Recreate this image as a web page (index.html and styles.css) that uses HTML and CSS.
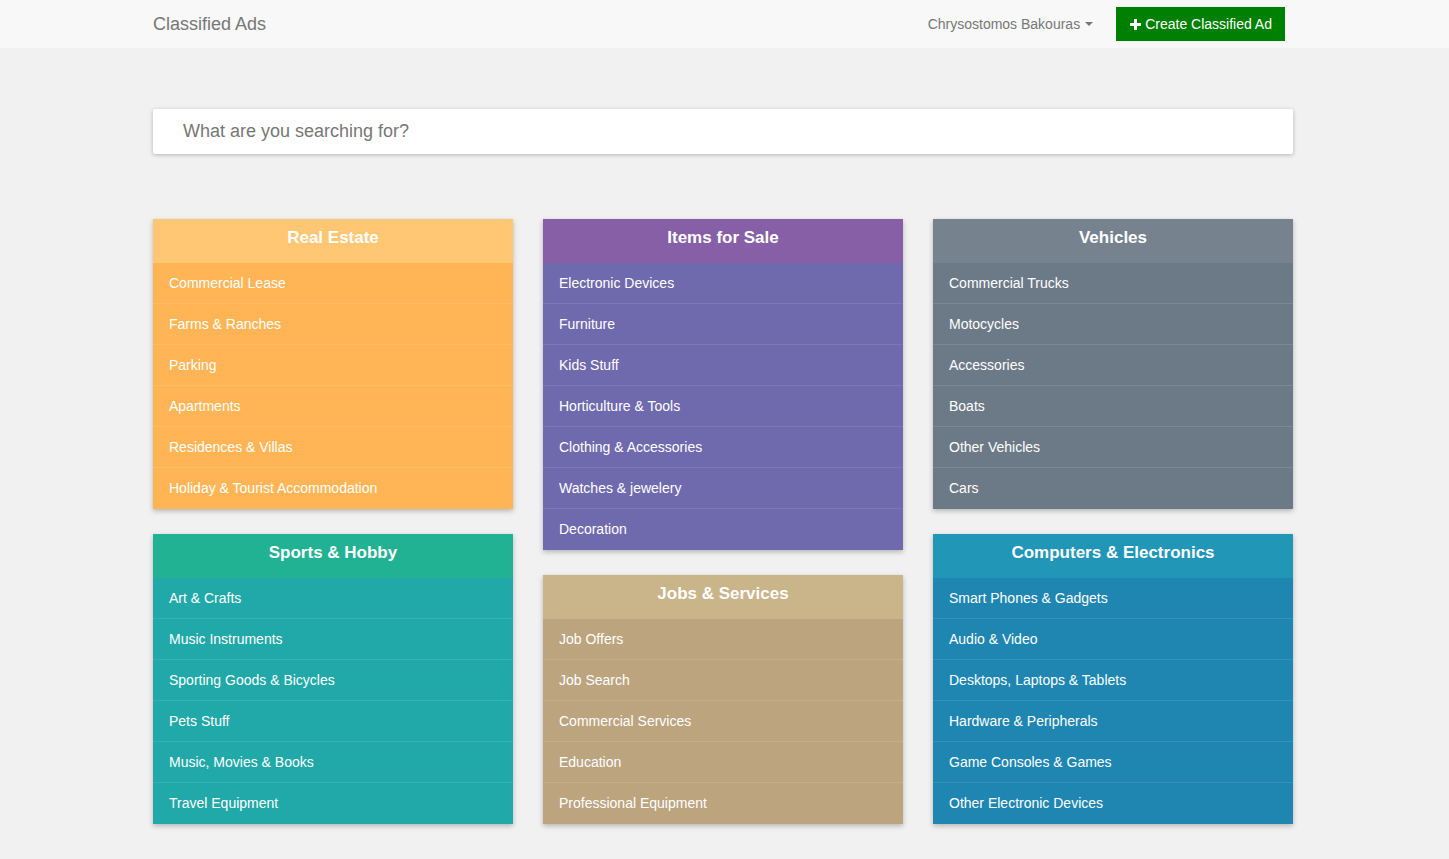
FILE: index.html
```html
<!DOCTYPE html>
<html>
<head>
<meta charset="utf-8">
<title>Classified Ads</title>
<link rel="stylesheet" href="styles.css">
</head>
<body>
<nav class="navbar">
  <div class="container nav-inner">
    <a class="brand" href="#">Classified Ads</a>
    <div class="nav-right">
      <span class="user">Chrysostomos Bakouras <span class="caret"></span></span>
      <a class="btn-create" href="#"><svg class="plus" width="11" height="11" viewBox="0 0 11 11"><rect x="4" y="0" width="3" height="11" fill="#fff"/><rect x="0" y="4" width="11" height="3" fill="#fff"/></svg>Create Classified Ad</a>
    </div>
  </div>
</nav>
<main class="container">
  <div class="search"><input type="text" placeholder="What are you searching for?"></div>
  <div class="grid">
    <div class="col">
      <div class="panel orange">
        <div class="panel-head">Real Estate</div>
        <ul>
          <li>Commercial Lease</li>
          <li>Farms &amp; Ranches</li>
          <li>Parking</li>
          <li>Apartments</li>
          <li>Residences &amp; Villas</li>
          <li>Holiday &amp; Tourist Accommodation</li>
        </ul>
      </div>
      <div class="panel teal">
        <div class="panel-head">Sports &amp; Hobby</div>
        <ul>
          <li>Art &amp; Crafts</li>
          <li>Music Instruments</li>
          <li>Sporting Goods &amp; Bicycles</li>
          <li>Pets Stuff</li>
          <li>Music, Movies &amp; Books</li>
          <li>Travel Equipment</li>
        </ul>
      </div>
    </div>
    <div class="col">
      <div class="panel purple">
        <div class="panel-head">Items for Sale</div>
        <ul>
          <li>Electronic Devices</li>
          <li>Furniture</li>
          <li>Kids Stuff</li>
          <li>Horticulture &amp; Tools</li>
          <li>Clothing &amp; Accessories</li>
          <li>Watches &amp; jewelery</li>
          <li>Decoration</li>
        </ul>
      </div>
      <div class="panel tan">
        <div class="panel-head">Jobs &amp; Services</div>
        <ul>
          <li>Job Offers</li>
          <li>Job Search</li>
          <li>Commercial Services</li>
          <li>Education</li>
          <li>Professional Equipment</li>
        </ul>
      </div>
    </div>
    <div class="col">
      <div class="panel slate">
        <div class="panel-head">Vehicles</div>
        <ul>
          <li>Commercial Trucks</li>
          <li>Motocycles</li>
          <li>Accessories</li>
          <li>Boats</li>
          <li>Other Vehicles</li>
          <li>Cars</li>
        </ul>
      </div>
      <div class="panel blue">
        <div class="panel-head">Computers &amp; Electronics</div>
        <ul>
          <li>Smart Phones &amp; Gadgets</li>
          <li>Audio &amp; Video</li>
          <li>Desktops, Laptops &amp; Tablets</li>
          <li>Hardware &amp; Peripherals</li>
          <li>Game Consoles &amp; Games</li>
          <li>Other Electronic Devices</li>
        </ul>
      </div>
    </div>
  </div>
</main>
</body>
</html>
```
FILE: styles.css
```css
* { box-sizing: border-box; }
html, body { margin: 0; padding: 0; }
body {
  background: #f1f1f1;
  font-family: "Liberation Sans", Arial, sans-serif;
  font-size: 14px;
  color: #333;
}
.container {
  width: 1140px;
  margin-left: calc((100% - 1143px) / 2);
}
.navbar {
  background: #f8f8f8;
  height: 48px;
}
.nav-inner {
  display: flex;
  align-items: center;
  justify-content: space-between;
  height: 48px;
}
.brand {
  color: #777;
  font-size: 18px;
  text-decoration: none;
}
.nav-right {
  display: flex;
  align-items: center;
  margin-right: 8px;
}
.user {
  color: #777;
  font-size: 14px;
  margin-right: 23px;
  display: flex;
  align-items: center;
}
.caret {
  display: inline-block;
  width: 0; height: 0;
  border-top: 4px solid #777;
  border-left: 4px solid transparent;
  border-right: 4px solid transparent;
  margin-left: 5px;
}
.btn-create {
  display: flex;
  align-items: center;
  background: #008000;
  color: #fff;
  text-decoration: none;
  font-size: 14px;
  height: 34px;
  padding: 0 13px 0 14px;
}
.plus { margin-right: 4px; }
.search {
  margin-top: 61px;
  background: #fff;
  height: 45px;
  box-shadow: 0 1px 4px rgba(0,0,0,0.25);
  border-radius: 2px;
  display: flex;
  align-items: center;
}
.search input {
  border: none;
  outline: none;
  background: transparent;
  width: 100%;
  height: 100%;
  padding: 0 30px;
  font-family: "Liberation Sans", Arial, sans-serif;
  font-size: 18px;
  color: #555;
}
.search input::placeholder { color: #777; }
.grid {
  margin-top: 65px;
  display: grid;
  grid-template-columns: repeat(3, 360px);
  column-gap: 30px;
  align-items: start;
  padding-bottom: 40px;
}
.col {
  display: flex;
  flex-direction: column;
  gap: 25px;
}
.panel {
  box-shadow: 0 2px 5px rgba(0,0,0,0.25);
  color: #fff;
}
.panel-head {
  height: 44px;
  text-align: center;
  font-weight: bold;
  font-size: 17px;
  line-height: 20px;
  padding-top: 9px;
}
.panel ul {
  list-style: none;
  margin: 0;
  padding: 0;
}
.panel li {
  height: 41px;
  line-height: 40px;
  padding: 0 16px;
  font-size: 14px;
  border-bottom: 1px solid rgba(255,255,255,0.1);
}
.panel li:last-child { border-bottom: none; }
.orange .panel-head { background: #ffc673; }
.orange ul { background: #ffb556; }
.purple .panel-head { background: #865fa6; }
.purple ul { background: #6f69ad; }
.slate .panel-head { background: #76838f; }
.slate ul { background: #6c7a87; }
.teal .panel-head { background: #21b193; }
.teal ul { background: #21a8a8; }
.tan .panel-head { background: #cab48a; }
.tan ul { background: #bca47f; }
.blue .panel-head { background: #2196b6; }
.blue ul { background: #1e86b1; }
```
